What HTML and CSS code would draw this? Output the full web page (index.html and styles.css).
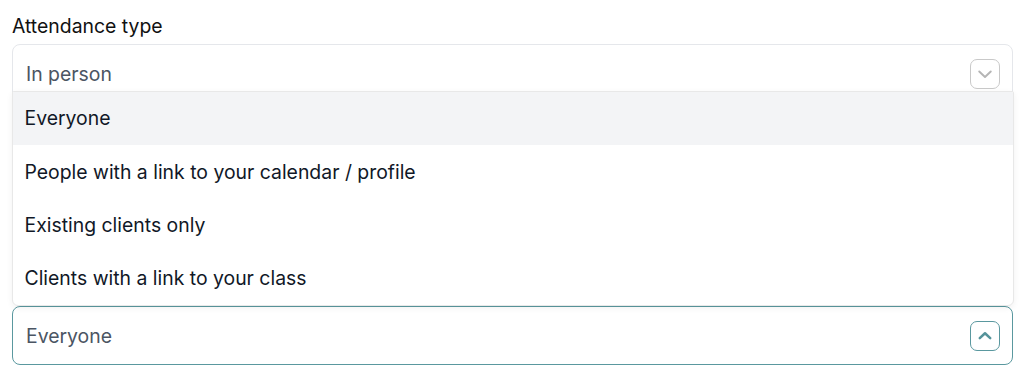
FILE: index.html
```html
<!DOCTYPE html>
<html lang="en">
<head>
    <meta charset="UTF-8">
    <meta name="viewport" content="width=device-width, initial-scale=1.0">
    <title>Attendance</title>
    <link rel="stylesheet" href="styles.css">
</head>
<body>
    <div class="form">
        <div class="field">
            <label class="field-label">Attendance type</label>
            <div class="select">
                <span class="select-value">In person</span>
                <span class="select-toggle">
                    <svg viewBox="0 0 16 16" fill="none"><path d="M3.8 6.2l4.2 4 4.2-4" stroke="#b5b5b5" stroke-width="1.4" stroke-linecap="round" stroke-linejoin="round"/></svg>
                </span>
            </div>
        </div>

        <div class="field field-open">
            <div class="select select-active">
                <span class="select-value">Everyone</span>
                <span class="select-toggle">
                    <svg viewBox="0 0 16 16" fill="none"><path d="M4.2 9.6l3.8-3.6 3.8 3.6" stroke="#55939a" stroke-width="1.8" stroke-linecap="round" stroke-linejoin="round"/></svg>
                </span>

                <ul class="select-menu">
                    <li class="option option-selected">Everyone</li>
                    <li class="option">People with a link to your calendar / profile</li>
                    <li class="option">Existing clients only</li>
                    <li class="option">Clients with a link to your class</li>
                </ul>
            </div>
        </div>
    </div>
</body>
</html>
```

FILE: styles.css
```css
* {
    margin: 0;
    padding: 0;
    box-sizing: border-box;
}

body {
    font-family: Inter, 'Noto Sans', sans-serif;
    background: #fff;
    color: #111827;
    padding: 14px 11px 0 12px;
}

.field-label {
    display: block;
    font-size: 19.4px;
    line-height: 24px;
    color: #111;
    margin-bottom: 6px;
}

.select {
    position: relative;
    height: 59px;
    border: 1px solid #e5e7eb;
    border-radius: 8px;
    display: flex;
    align-items: center;
    justify-content: space-between;
    padding: 0 12px 0 13px;
    background: #fff;
}

.select-value {
    font-size: 19.4px;
    color: #4b5563;
}

.select-toggle {
    width: 30px;
    height: 30px;
    border: 1.5px solid #c9c9c9;
    border-radius: 7px;
    display: flex;
    align-items: center;
    justify-content: center;
}

.select-toggle svg {
    width: 22px;
    height: 22px;
}

.field-open {
    margin-top: 203px;
}

.select-active {
    border: 1.5px solid #5a989f;
}

.select-active .select-toggle {
    border-color: #5a989f;
}

.select-menu {
    position: absolute;
    left: -1.5px;
    right: -1.5px;
    bottom: calc(100% + 1px);
    list-style: none;
    background: #fff;
    border: 1px solid #e8e8e8;
    border-radius: 2px 2px 6px 6px;
    box-shadow: 0 2px 6px rgba(0, 0, 0, 0.06);
    overflow: hidden;
}

.option {
    height: 53.3px;
    display: flex;
    align-items: center;
    padding-left: 12px;
    font-size: 19.4px;
    color: #111827;
}

.option-selected {
    background: #f3f4f6;
}
```
